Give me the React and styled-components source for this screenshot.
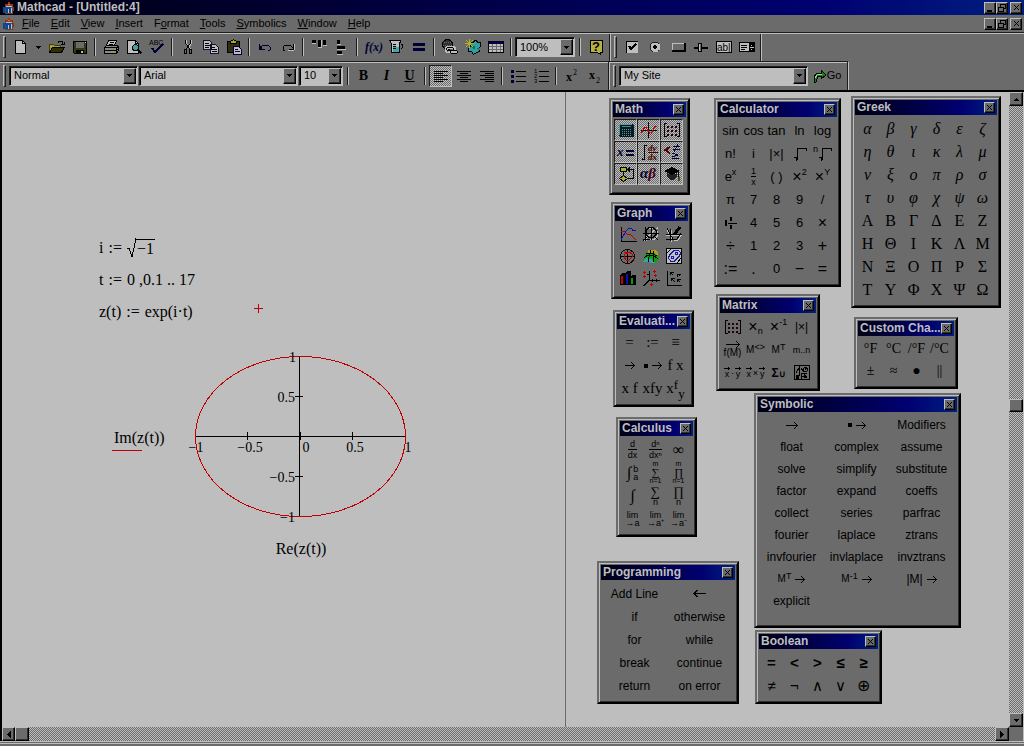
import React from 'react';
import styled, { createGlobalStyle, css } from 'styled-components';

const FACE = '#6b6b6b';
const LIGHT = '#bebebe';
const DARK = '#1c1c1c';
const RED = '#c00000';
const SANS = '"Liberation Sans", Arial, sans-serif';
const SERIF = '"Liberation Serif", "Times New Roman", serif';
const CHECKER = `repeating-conic-gradient(${LIGHT} 0 25%, ${FACE} 0 50%) 0 0 / 2px 2px`;
const CAPTION = 'linear-gradient(to right, #000014, #000070 75%, #001f80)';

const GlobalStyle = createGlobalStyle`
    * {
        box-sizing: border-box;
    }
    body {
        margin: 0;
        background: ${FACE};
        color: #000;
        font: 11px/13px ${SANS};
        overflow: hidden;
    }
`;

const raised = css`
    background: ${FACE};
    border: 1px solid;
    border-color: ${LIGHT} #000 #000 ${LIGHT};
    box-shadow: inset -1px -1px 0 #303030;
`;

const Plain = styled.button`
    display: flex;
    align-items: center;
    justify-content: center;
    padding: 0;
    border: 0;
    background: none;
    color: inherit;
    font: inherit;
`;

const Shell = styled.div`
    display: flex;
    flex-direction: column;
    height: 100vh;
`;

const TitleBar = styled.header`
    display: flex;
    align-items: center;
    gap: 3px;
    height: 15px;
    padding: 0 2px;
    background: linear-gradient(to right, #000010, #000070 80%, #001f80);
    color: ${LIGHT};
`;

const AppTitle = styled.h1`
    margin: 0;
    flex: 1;
    font-size: 12px;
`;

const MenuBar = styled.nav`
    display: flex;
    align-items: center;
    gap: 8px;
    height: 17px;
    padding: 0 2px;
`;

const MenuList = styled.div`
    display: flex;
    gap: 11px;
`;

const WindowButtons = styled.div`
    display: flex;
    margin-left: auto;
`;

const WindowButton = styled(Plain)`
    ${raised}
    width: 12px;
    height: 12px;
    &:last-child {
        margin-left: 2px;
    }
`;

const Toolbars = styled.div`
    display: flex;
    flex-direction: column;
    align-items: flex-start;
    border-top: 1px solid ${DARK};
    box-shadow: inset 0 1px 0 ${LIGHT};
    padding-top: 1px;
`;

const ToolRow = styled.div`
    display: flex;
    height: ${p => p.$height}px;
    & + & {
        border-top: 1px solid ${DARK};
        box-shadow: inset 0 1px 0 ${LIGHT};
    }
`;

const Band = styled.div`
    display: flex;
    align-items: center;
    padding: 0 2px 1px 3px;
    border-right: 1px solid ${DARK};
    box-shadow: 1px 0 0 ${LIGHT};
    & + & {
        margin-left: 1px;
    }
`;

const Grip = styled.div`
    width: 3px;
    height: 22px;
    margin-right: 3px;
    border: 1px solid;
    border-color: ${LIGHT} ${DARK} ${DARK} ${LIGHT};
`;

const Separator = styled.div`
    width: 2px;
    height: 18px;
    margin: 0 3px;
    border-left: 1px solid ${DARK};
    border-right: 1px solid ${LIGHT};
`;

const Tool = styled(Plain)`
    width: ${p => p.$width || 23}px;
    height: 22px;
    ${p => p.$pressed && css`
        background: ${CHECKER};
        border: 1px solid;
        border-color: ${DARK} ${LIGHT} ${LIGHT} ${DARK};
    `}
`;

const FormatLetter = styled.span`
    font: bold 14px/16px ${SERIF};
    font-style: ${p => (p.$italic ? 'italic' : 'normal')};
    text-decoration: ${p => (p.$underline ? 'underline' : 'none')};
`;

const ComboFrame = styled.div`
    display: flex;
    width: ${p => p.$width}px;
    height: 20px;
    margin-right: 1px;
    border: 1px solid;
    border-color: ${DARK} ${LIGHT} ${LIGHT} ${DARK};
    box-shadow: inset 1px 1px 0 #000;
    background: ${LIGHT};
    padding: 1px;
`;

const ComboSelect = styled.select`
    appearance: none;
    flex: 1;
    min-width: 0;
    padding: 0 0 0 3px;
    border: 0;
    background: none;
    color: #000;
    font: 11px/15px ${SANS};
`;

const ComboArrow = styled.span`
    ${raised}
    display: flex;
    align-items: center;
    justify-content: center;
    width: 13px;
`;

const Svg = styled.svg`
    display: block;
    flex: none;
    overflow: visible;
    shape-rendering: crispEdges;
`;

const Work = styled.main`
    flex: 1;
    min-height: 0;
    display: grid;
    grid-template-columns: minmax(0, 1fr) 14px;
    grid-template-rows: minmax(0, 1fr) 14px;
    border: solid #000;
    border-width: 2px 0 0 2px;
    box-shadow: inset -1px 0 0 ${LIGHT};
    padding-right: 1px;
`;

const Desk = styled.div`
    position: relative;
    overflow: hidden;
    background: ${LIGHT};
`;

const PageEdge = styled.div`
    position: absolute;
    top: 0;
    bottom: 0;
    left: 563px;
    border-left: 1px solid ${FACE};
`;

const Region = styled.div`
    position: absolute;
    left: ${p => p.$x}px;
    top: ${p => p.$y}px;
    display: flex;
    align-items: center;
    gap: 5px;
    font: 16px/18px ${SERIF};
    white-space: pre;
`;

const PlotRegion = styled(Region)`
    display: grid;
    grid-template-columns: 54px 222px;
    column-gap: 24px;
    row-gap: 12px;
`;

const TraceLabel = styled.div`
    padding-left: 2px;
    position: relative;
    &::after {
        content: '';
        position: absolute;
        left: 0;
        bottom: -4px;
        width: 30px;
        border-bottom: 1px solid ${RED};
    }
`;

const XLabel = styled.div`
    grid-column: 2;
    text-align: center;
`;

const Root = styled.span`
    display: flex;
    align-items: flex-end;
`;

const Radicand = styled.span`
    border-top: 1px solid #000;
    padding: 0 1px;
`;

const Track = styled.div`
    display: grid;
    background: ${CHECKER};
    ${p => (p.$vertical
        ? 'grid-template-rows: 14px 294fr 13px 302fr 14px;'
        : 'grid-template-columns: 13px 0fr 14px 1fr 14px;')}
`;

const ScrollButton = styled(Plain)`
    ${raised}
`;

const Status = styled.footer`
    height: 5px;
    border-top: 1px solid ${LIGHT};
    box-shadow: inset 0 1px 0 ${FACE}, inset 0 2px 0 ${LIGHT};
`;

const PaletteFrame = styled.section`
    position: absolute;
    left: ${p => p.$x}px;
    top: ${p => p.$y}px;
    padding: 2px 2px ${p => p.$foot}px 2px;
    background: ${FACE};
    border: 2px solid;
    border-color: ${FACE} #000 #000 ${FACE};
    box-shadow: inset 1px 1px 0 ${LIGHT}, inset -1px -1px 0 #303030;
`;

const PaletteCaption = styled.div`
    display: flex;
    align-items: center;
    height: 15px;
    padding: 0 2px;
    background: ${CAPTION};
    color: ${LIGHT};
`;

const PaletteTitle = styled.h2`
    flex: 1;
    margin: 0;
    font: bold 12px/15px ${SANS};
`;

const PaletteClose = styled(Plain)`
    ${raised}
    width: 11px;
    height: 11px;
`;

const CellGrid = styled.div`
    display: grid;
    grid-template-columns: repeat(${p => p.$cols}, ${p => p.$cell}px);
    grid-auto-rows: ${p => p.$row}px;
    padding: 2px 3px 0 1px;
`;

const Cell = styled(Plain)`
    gap: 4px;
    font: ${p => p.$font || `12px/14px ${SANS}`};
    white-space: nowrap;
    ${p => p.$pressed && css`
        background: ${CHECKER};
        border: 1px solid;
        border-color: ${DARK} ${LIGHT} ${LIGHT} ${DARK};
    `}
`;

const Small = styled.span`
    font-size: ${p => p.$size || 9}px;
    line-height: 9px;
    align-self: ${p => (p.$low ? 'flex-end' : 'flex-start')};
`;

const Script = styled.span`
    display: flex;
    gap: ${p => p.$gap || 0}px;
    height: ${p => p.$height || 18}px;
    align-items: center;
`;

const Stack = styled.span`
    display: flex;
    flex-direction: column;
    align-items: center;
    font-size: ${p => p.$size || 9}px;
    line-height: ${p => p.$line || 8}px;
`;

const Bar = styled.span`
    align-self: stretch;
    border-top: 1px solid #000;
    margin: 1px 0;
`;

const Big = styled.span`
    font: ${p => p.$size || 14}px/${p => p.$line || 14}px ${SERIF};
`;

// operators are drawn larger than the digits next to them
const Op = styled.span`
    font-size: 16px;
    line-height: 14px;
`;

const Icon = ({ w = 16, h = 16, children }) => (
    <Svg width={w} height={h} viewBox={`0 0 ${w} ${h}`} fill="none" stroke="#000" aria-hidden="true">
        {children}
    </Svg>
);

const Glyph = ({ size = 12, family = SERIF, fill = '#000', ...rest }) => (
    <text fontSize={size} fontFamily={family} fill={fill} stroke="none" {...rest} />
);

const Logo = () => (
    <Icon w={12} h={12}>
        <path d="M3 2h7v9h-7z" fill={LIGHT} stroke="#704020" />
        <path d="M7 0.500l2 3h-4z" fill="#c08020" stroke="#b03010" />
        <path d="M1.500 11v-5h3v5m0-5h3v5" stroke="#0048a0" strokeWidth="2" />
        <path d="M9 5h2v4" stroke="#903020" />
    </Icon>
);

const Down = () => <Icon w={5} h={3}><path d="M0 .5h5M1 1.500h3M2 2.500h1" /></Icon>;
const Up = () => <Icon w={5} h={3}><path d="M2 .5h1M1 1.500h3M0 2.500h5" /></Icon>;
const Left = () => <Icon w={4} h={7}><path d="M3.500 0v7M2.500 1v5M1.500 2v3M.5 3v1" /></Icon>;
const Right = () => <Icon w={4} h={7}><path d="M.5 0v7M1.500 1v5M2.500 2v3M3.500 3v1" /></Icon>;
const Cross = () => <Icon w={7} h={7}><path d="M1 1h1v1h1v1h1v-1h1v-1h1v1h-1v1h-1v1h1v1h1v1h-1v-1h-1v-1h-1v1h-1v1h-1v-1h1v-1h1v-1h-1v-1h-1z" fill="#000" stroke="none" /></Icon>;

const Arrow = ({ w = 12 }) => (
    <Icon w={w} h={7}>
        <path d={`M0 3.500h${w}M${w - 2} 2.500h1M${w - 3} 1.500h1M${w - 4} .5h1M${w - 2} 4.500h1M${w - 3} 5.500h1M${w - 4} 6.500h1`} />
    </Icon>
);
const BackArrow = () => <Icon w={13} h={7}><path d="M0 3.500h13M1 2.500h2M2 1.500h2M3 .5h2M1 4.500h2M2 5.500h2M3 6.500h2" /></Icon>;
const Dot = () => <Icon w={4} h={4}><path d="M0 0h4v4h-4z" fill="#000" stroke="none" /></Icon>;
const TinyArrow = () => <Icon w={6} h={3}><path d="M0 1.500h6M4 .5h1M4 2.500h1" /></Icon>;

const icons = {
    new: <Icon><path d="M2.500 1.500h7l3 3v10h-10z" fill={LIGHT} /><path d="M9.500 1.500v3h3" /></Icon>,
    open: (
        <Icon>
            <path d="M.5 13.500v-8h4l1 1h6v2" fill="#a8a040" stroke="#404000" />
            <path d="M.5 13.500l3-5h12l-3 5z" fill="#303000" />
            <path d="M9 3.500l1-1h3l1 2m1-2v3h-3" />
        </Icon>
    ),
    save: (
        <Icon>
            <path d="M1.500 2.500h13v12h-12l-1-1z" fill="#383810" />
            <path d="M4 3h8v6h-8z" fill={FACE} stroke="none" />
            <path d="M4 11h8v4h-8z" fill="#000" stroke="none" />
            <path d="M9 12h2v2h-2zM13 3h1v1h-1z" fill={LIGHT} stroke="none" />
        </Icon>
    ),
    print: (
        <Icon>
            <path d="M5.500 1.500h8l-2 5h-8z" fill={LIGHT} />
            <path d="M7 3.500h4M6 5.500h4" />
            <path d="M1.500 8.500l2-2h10l2 1v4l-2 3h-12z" fill="#8a8a8a" />
            <path d="M2 8.500h11v5M2 11.500h11M13.500 8.500l2-1M13.500 11.500l2-2" />
            <path d="M8 12.500h3" stroke="#b0b000" />
        </Icon>
    ),
    preview: (
        <Icon>
            <path d="M1.500 1.500h8l3 3v10h-11z" fill={LIGHT} />
            <path d="M9.500 1.500v3h3" />
            <circle cx="9.500" cy="8.500" r="3" fill="#40a0a0" />
            <path d="M11.500 10.500l4 4" strokeWidth="2" />
        </Icon>
    ),
    spell: (
        <Icon>
            <Glyph x="0" y="6" size="7" family={SANS}>ABC</Glyph>
            <path d="M3 9l3 4 8-8" stroke="#000038" strokeWidth="2" />
        </Icon>
    ),
    cut: (
        <Icon>
            <path d="M6.500 1v3l4 6M11.500 1v3l-3 5" stroke={LIGHT} />
            <path d="M5.500 1v3l2 3 3 4M10.500 1v3l-2 3-3 4" />
            <path d="M4.500 10.500h2v4h-2zM9.500 10.500h2v4h-2z" />
        </Icon>
    ),
    copy: (
        <Icon>
            <path d="M.5 1.500h6l2 2v7h-8zM7.500 5.500h5l3 3v6h-8z" fill={LIGHT} stroke="#101030" />
            <path d="M2 4.500h4M2 6.500h5M2 8.500h4M9 8.500h3M9 10.500h5M9 12.500h5" />
        </Icon>
    ),
    paste: (
        <Icon>
            <path d="M1.500 2.500h12v11h-12z" fill="#303010" />
            <path d="M4.500 4.500v-2l3-2 3 2v2z" fill="#a8a820" />
            <path d="M7.500 7.500h5l3 3v5h-8z" fill={LIGHT} stroke="#000040" />
            <path d="M9 10.500h3M9 12.500h5" stroke="#000040" />
        </Icon>
    ),
    undo: <Icon><path d="M2.500 5v5h5M3 9l3-3h5l2 2v3l-2 1" stroke="#000030" /><path d="M2 6h1v1h1v1h1v2h-3z" fill="#000030" stroke="none" /></Icon>,
    redo: <Icon><path d="M13.500 5v5h-5M13 9l-3-3h-5l-2 2v3l2 1" /><path d="M14 11.500h-6M14.500 5v6" stroke={LIGHT} /></Icon>,
    alignTop: <Icon><path d="M1 1h4v3h-4zM7 1h3v7h-3zM12 1h3v5h-3z" fill="#000" stroke="none" /><path d="M1 4.500h4M7 8.500h4M12 6.500h4M10.500 1v7" stroke={LIGHT} /></Icon>,
    alignLeft: <Icon><path d="M3 1h3v4h-3zM3 7h8v3h-8zM3 12h5v3h-5z" fill="#000" stroke="none" /><path d="M3 5.500h4M3 10.500h9M3 15.500h6" stroke={LIGHT} /></Icon>,
    fx: <Icon><Glyph x="0" y="12" size="12" fill="#000038" fontStyle="italic" fontWeight="bold">f(x)</Glyph></Icon>,
    unit: (
        <Icon>
            <path d="M1.500 1.500h11v2h-1v10h-8v-9z" fill={LIGHT} />
            <path d="M5 8h6v5h-6z" fill="#40a8b0" stroke="none" />
            <path d="M5 5.500h3M5 7.500h3M5 9.500h3M12.500 5.500h2v3l-2 2" />
        </Icon>
    ),
    equals: <Icon><path d="M2 4h12v3h-12zM2 9h12v3h-12z" fill="#000038" stroke="none" /></Icon>,
    link: (
        <Icon>
            <circle cx="5.500" cy="5.500" r="5" fill="#303030" />
            <path d="M2 3.500h7M1 6.500h9" stroke={FACE} strokeDasharray="1 1" />
            <path d="M5.500 8.500h6l1 1v2l-1 1h-6l-1-1v-2z" stroke={LIGHT} strokeWidth="3" />
            <path d="M9.500 11.500h5l1 1v1l-1 1h-5l-1-1v-1z" fill={LIGHT} />
            <path d="M5.500 8.500h5l1 1v1l-1 1h-5l-1-1v-1z" />
        </Icon>
    ),
    web: (
        <Icon>
            <path d="M5.500 3.500h3l1-2h2l1 2h3v4l-2 2 1 3-3 1-3 2-2-3h-3v-3l2-2z" fill="#30a0a8" />
            <path d="M6 7h4v3h-2zM11 9h3v3" fill="#207040" stroke="none" />
            <path d="M4.500 0v9M0 4.500h9M1 1l7 7M8 1l-7 7" stroke="#b8b020" />
        </Icon>
    ),
    table: (
        <Icon>
            <path d="M.5 2.500h15v11h-15z" fill={LIGHT} />
            <path d="M1 3h14v2h-14z" fill="#000050" stroke="none" />
            <path d="M1 7.500h14M1 10.500h14M4.500 5v8M8.500 5v8M12.500 5v8" stroke={FACE} />
        </Icon>
    ),
    help: (
        <Icon>
            <path d="M2.500 1.500h12v12h-2v2l-3-2h-7z" fill="#b8b040" />
            <Glyph x="4" y="12" size="13" family={SANS} fontWeight="bold">?</Glyph>
        </Icon>
    ),
    check: <Icon><path d="M2 2h12v12h-12z" fill={LIGHT} stroke="none" /><path d="M2.500 14v-11.500h11.500" /><path d="M5 7l2 3 5-5" strokeWidth="2" /></Icon>,
    radio: (
        <Icon>
            <circle cx="8" cy="8" r="5" fill={LIGHT} stroke="#202020" />
            <path d="M12.500 5v6M11 12.500h-5" stroke={LIGHT} />
            <path d="M6 7h4v2h-4zM7 6h2v4h-2z" fill="#000" stroke="none" />
        </Icon>
    ),
    push: <Icon><path d="M2 4.500h12M2.500 4v8" stroke={LIGHT} /><path d="M2 11.500h12.500v-7.500" strokeWidth="2" /></Icon>,
    slider: <Icon><path d="M1 8.500h14" strokeWidth="2" /><path d="M5.500 4.500h3v8h-3z" fill={FACE} /><path d="M6.500 5v7" stroke={LIGHT} /></Icon>,
    text: <Icon><path d="M.5 2.500h15v11h-15z" fill={LIGHT} /><Glyph x="1" y="12" size="10" family={SANS}>ab|</Glyph></Icon>,
    list: (
        <Icon>
            <path d="M.5 3.500h15v9h-15z" fill={LIGHT} />
            <path d="M2 6.500h6M2 8.500h6M2 10.500h4" />
            <path d="M10 4h5v8h-5z" fill="#000" stroke="none" /><path d="M11 8h4M12 6h1M12 10h1" stroke={LIGHT} />
        </Icon>
    ),
    left: <Icon><path d="M1 3.500h14M1 5.500h9M1 7.500h14M1 9.500h9M1 11.500h14M1 13.500h9" /></Icon>,
    center: <Icon><path d="M1 3.500h14M4 5.500h8M1 7.500h14M4 9.500h8M1 11.500h14M4 13.500h8" /></Icon>,
    right: <Icon><path d="M1 3.500h14M6 5.500h9M1 7.500h14M6 9.500h9M1 11.500h14M6 13.500h9" /></Icon>,
    bullets: <Icon><path d="M1 2h3v3h-3zM1 7h3v3h-3zM1 12h3v3h-3z" fill="#000030" stroke="none" /><path d="M6 3.500h10M6 8.500h10M6 13.500h10" /></Icon>,
    numbers: (
        <Icon>
            <Glyph size="6" family={SANS} x="1" y="5">1</Glyph>
            <Glyph size="6" family={SANS} x="1" y="10">2</Glyph>
            <Glyph size="6" family={SANS} x="1" y="15">3</Glyph>
            <path d="M6 3.500h10M6 8.500h10M6 13.500h10" />
        </Icon>
    ),
    sup: <Icon><Glyph size="12" x="2" y="13" fontWeight="bold">x</Glyph><Glyph size="8" x="9" y="7">2</Glyph></Icon>,
    sub: <Icon><Glyph size="12" x="2" y="11" fontWeight="bold">x</Glyph><Glyph size="8" x="9" y="15">2</Glyph></Icon>,
    go: (
        <Icon w={14} h={14}>
            <path d="M1 13v-5l3-4h4v-3l5 5-5 4v-3h-3l-2 6z" fill="#009000" />
            <path d="M2 9l3-4h4" stroke={LIGHT} />
        </Icon>
    ),
    // math palette
    calc: (
        <Icon w={18}>
            <path d="M2 2h14l1 2v11h-14l-1-1z" fill="#001c24" stroke="none" />
            <path d="M2.500 13v-10.500h12" stroke="#40a0a8" />
            <path d="M5 4.500h9" stroke="#607878" />
            <path d="M5 7.500h10M5 9.500h10M5 11.500h10M5 13.500h10" stroke="#7c8c8c" strokeDasharray="1 1" />
        </Icon>
    ),
    curve: <Icon w={18}><path d="M1 8.500h16M8.500 0v16" /><path d="M1 11l4-6h1l4 7h1l4-8h2" stroke={RED} /></Icon>,
    matrix: (
        <Icon w={18}>
            <path d="M4 1.500h-2.500v13h2.500M14 1.500h2.500v13h-2.500" />
            <path d="M4 4.500h10M4 8.500h10M4 12.500h10" stroke="#200010" strokeWidth="2" strokeDasharray="2 2" />
        </Icon>
    ),
    evaluate: <Icon w={18}><Glyph x="0" y="12" size="13" fontWeight="bold" fontStyle="italic" fill="#000030">x</Glyph><path d="M9 6.500h8M9 10.500h8" stroke="#000030" strokeWidth="2" /></Icon>,
    calculus: (
        <Icon w={18}>
            <path d="M6.500 2v-1h-2v14h-2v-1" />
            <Glyph x="8" y="7" size="9" fontStyle="italic" fontWeight="bold" fill="#400000">dy</Glyph>
            <path d="M8 8.500h10" stroke="#400000" />
            <Glyph x="8" y="16" size="9" fontStyle="italic" fontWeight="bold" fill="#400000">dx</Glyph>
        </Icon>
    ),
    bool: (
        <Icon w={18}>
            <path d="M7 3l-5 3 5 3" stroke="#500000" strokeWidth="2" />
            <path d="M10 2.500h7M10 5.500h7M15 0l-4 8M9 9l6 2-6 2M9 14.500h7" stroke="#000030" />
        </Icon>
    ),
    program: (
        <Icon w={18}>
            <path d="M3.500 1.500h6v4h-6z" fill="#b0b020" /><path d="M6.500 9.500l4 3-4 3-4-3z" fill="#b0b020" />
            <path d="M6.500 6v3M11 12.500h5v-9h-4M13 1.500l-2 2 2 2" />
        </Icon>
    ),
    greek: <Icon w={18}><Glyph x="0" y="12" size="15" fontWeight="bold" fontStyle="italic" fill="#000030">α<tspan fill="#400010">β</tspan></Glyph></Icon>,
    symbolic: (
        <Icon w={18}>
            <path d="M9 1l8 4-8 4-8-4z" fill="#000" stroke="none" />
            <path d="M4 7v4l4 3h2l4-3v-4l-5 2z" fill="#202020" stroke="none" />
            <path d="M9 5h6.500v9" /><path d="M15.500 11v4" stroke="#505010" strokeWidth="2" />
        </Icon>
    ),
    // graph palette
    xy: <Icon w={18}><path d="M2.500 1v14.500h15" /><path d="M2 5h3l3 3 4 1 5 5" stroke={RED} /><path d="M2 14l5-9 3-3 3 1 1 2 3-1" stroke="#1010b0" /></Icon>,
    zoom: (
        <Icon w={18}>
            <path d="M7 2.500h5l3 3v5l-3 3h-4M2 14.500l5-5 4-4 5-4M4.500 3v12" stroke={LIGHT} />
            <path d="M7 1.500h4l3 3v4l-3 3h-4l-3-3v-4z" />
            <path d="M3.500 1v14M9.500 1v13M1 7.500h16M1 13.500h7M12 10l4 4M1 15l5-5" />
        </Icon>
    ),
    trace: (
        <Icon w={18}>
            <path d="M1 9.500h16M6.500 4v12M2 4l3 6M9 14h4l4-6" stroke={LIGHT} />
            <path d="M1 8.500h16M5.500 3v12M2 2l3 6 3 5h4l4-6M1 13.500h7" />
            <path d="M9 9l6-8" strokeWidth="3" />
        </Icon>
    ),
    polar: (
        <Icon w={18}>
            <circle cx="8.500" cy="8.500" r="7" stroke="#200000" /><path d="M1 8.500h15M8.500 1v15" />
            <path d="M9 5l-3 1-1 3 2 3 3 0 3-3v-3l-3-2-5 0" stroke={RED} />
        </Icon>
    ),
    surface: (
        <Icon w={18}>
            <path d="M1 14l3-9 3-3 7 1 3 7-3 5z" fill="#10a010" stroke="none" />
            <path d="M1 14l3-4 5 1 5 4z" fill="#30a8a8" stroke="none" />
            <path d="M6 3h6l4 3" stroke="#b0a020" strokeWidth="3" />
            <path d="M2 10l4-3h5l5 4M4 6l5-1 6 3M6 14l1-5 2-7M11 14v-6l1-5" />
        </Icon>
    ),
    contour: (
        <Icon w={18}>
            <path d="M1.500 .5h15v15h-15z" fill={LIGHT} />
            <path d="M5.500 13l-2-3 1-3 5-5h4l2 3-1 3-5 5z" stroke="#1818a0" />
            <path d="M6.500 8.500h2v2h-2zM10.500 4.500h2v2h-2z" stroke="#1818a0" />
            <path d="M2 5l4-4M12 15l4-5" />
        </Icon>
    ),
    bars: (
        <Icon w={18}>
            <path d="M1 5l2-2h3v12h-5zM6 3l2-2h4v14h-6zM11 7l2-2h4v10h-6z" fill="#000" stroke="none" />
            <path d="M2 6h2v8h-2z" fill={RED} stroke="none" /><path d="M7 4h2v10h-2z" fill="#1010b0" stroke="none" /><path d="M12 8h2v6h-2z" fill="#00a010" stroke="none" />
        </Icon>
    ),
    scatter: (
        <Icon w={18}>
            <path d="M7.500 1v9l-6 6M7 10.500h11M5 4.500h2M10.500 9v3M14.500 9v3" />
            <path d="M1 2.500h3M2.500 1v3M11 1.500h3M12.500 0v3M1 6.500h3M2.500 5v3M12 5.500h3M13.500 4v3M8 14.500h3M9.500 13v3" stroke={RED} />
        </Icon>
    ),
    vector: (
        <Icon w={18}>
            <path d="M2.500 1v14.500h14" /><path d="M8 5l-3-3M5.500 5v-3h3M15 6l-2-2M12.500 7v-3h3M10 12l-3-3M6.500 11v-3h3M15 12l-2-2M12.500 12v-3h3" />
        </Icon>
    ),
    root: <Icon w={14} h={14}><path d="M1 10.500h2.500v3M4.500 13v-11.500h9v2" /></Icon>,
    mixed: <Icon><path d="M2 5h2v6h-2zM7 2h2v4h-2zM7 10h2v4h-2z" fill="#000" stroke="none" /><path d="M5 8.500h9" /></Icon>,
    picture: (
        <Icon>
            <path d="M.5 .5h15v14h-15z" /><path d="M2 8l3-5v8l-3 3h5v-5l6-1M7 3l3 4M11 5l2-3M8 11l5 2M10 9l3 4" />
            <circle cx="11.500" cy="4.500" r="2" /><path d="M2 10h2v4h-2z" fill="#000" />
        </Icon>
    )
};

const Sup = ({ base, children, low, height }) => (
    <Script $height={height}>{base}<Small $low={low}>{children}</Small></Script>
);

const Frac = ({ top, bottom }) => <Stack><span>{top}</span><Bar /><span>{bottom}</span></Stack>;

const Limits = ({ top, symbol, bottom }) => (
    <Stack $size={top ? 7 : 9} $line={top ? 6 : 8}>
        {top && <span>{top}</span>}
        <Big $size={top ? 11 : 13} $line={top ? 11 : 12}>{symbol}</Big>
        <span>{bottom}</span>
    </Stack>
);

const VecPair = styled.span`
    display: flex;
    align-items: flex-end;
    gap: 1px;
    font-size: 9px;
    line-height: 9px;
`;

const Vec = ({ op }) => (
    <VecPair>
        <Stack><TinyArrow />x</Stack>{op}<Stack><TinyArrow />y</Stack>
    </VecPair>
);

const serif = size => `${size}px/${size + 2}px ${SERIF}`;

const times = <Op>×</Op>;
const matrixOf = script => <Sup base={<Stack $size={10}>M</Stack>} height={14}>{script}</Sup>;

const palettes = [
    {
        title: 'Math', x: 609, y: 98, cols: 3, row: 22, foot: 8, pressed: true,
        cells: ['calc', 'curve', 'matrix', 'evaluate', 'calculus', 'bool', 'program', 'greek', 'symbolic'].map(n => icons[n])
    },
    {
        title: 'Graph', x: 611, y: 202, cols: 3, row: 22, foot: 8,
        cells: ['xy', 'zoom', 'trace', 'polar', 'surface', 'contour', 'bars', 'scatter', 'vector'].map(n => icons[n])
    },
    {
        title: 'Evaluati...', x: 613, y: 310, cols: 3, font: serif(15),
        cells: [
            '=', ':=', '≡', <Arrow w={10} />, <><Dot /><Arrow w={10} /></>, 'f x', 'x f', 'xfy',
            <Script>x<Small $size={13}>f</Small><Small $size={13} $low>y</Small></Script>
        ]
    },
    {
        title: 'Calculus', x: 616, y: 417, cols: 3,
        cells: [
            <Frac top="d" bottom="dx" />, <Frac top="dⁿ" bottom="dxⁿ" />, <Big $size={16}>∞</Big>,
            <Script $gap={2}><Big $size={16}>∫</Big><Stack><span>b</span><span>a</span></Stack></Script>,
            <Limits top="m" symbol="∑" bottom="n=1" />, <Limits top="m" symbol="∏" bottom="n=1" />,
            <Big $size={16}>∫</Big>, <Limits symbol="∑" bottom="n" />, <Limits symbol="∏" bottom="n" />,
            <Stack><span>lim</span><span>→a</span></Stack>, <Stack><span>lim</span><span>→a⁺</span></Stack>, <Stack><span>lim</span><span>→a⁻</span></Stack>
        ]
    },
    {
        title: 'Calculator', x: 714, y: 98, cols: 5, font: `13px/15px ${SANS}`,
        cells: [
            'sin', 'cos', 'tan', 'ln', 'log',
            'n!', 'i', '|×|', icons.root, <Script><Small>n</Small>{icons.root}</Script>,
            <Sup base="e">x</Sup>, <Frac top="1" bottom="x" />, '( )', <Sup base={times}>2</Sup>, <Sup base={times}>Y</Sup>,
            'π', '7', '8', '9', '/', icons.mixed, '4', '5', '6', times, <Op>÷</Op>, '1', '2', '3', <Op>+</Op>,
            <Op>:=</Op>, <Op>.</Op>, '0', <Op>−</Op>, <Op>=</Op>
        ]
    },
    {
        title: 'Matrix', x: 716, y: 294, cols: 4,
        cells: [
            icons.matrix, <Sup base={times} low>n</Sup>, <Sup base={times}>-1</Sup>, '|×|',
            <Stack $size={10} $line={10}><Arrow w={14} />f(M)</Stack>, matrixOf('<>'), matrixOf('T'), <Stack>m..n</Stack>,
            <Vec op="·" />, <Vec op="×" />, <b>Σ<Small>∪</Small></b>, icons.picture
        ]
    },
    {
        title: 'Greek', x: 851, y: 96, cols: 6, font: serif(16),
        cells: [
            ...[...'αβγδεζηθικλμνξοπρστυφχψω'].map(c => <i>{c}</i>),
            ...'ΑΒΓΔΕΖΗΘΙΚΛΜΝΞΟΠΡΣΤΥΦΧΨΩ'
        ]
    },
    {
        title: 'Custom Cha...', x: 854, y: 317, cols: 4, row: 22, font: serif(14),
        cells: ['°F', '°C', '/°F', '/°C', '±', '≈', '●', '||']
    },
    {
        title: 'Symbolic', x: 754, y: 393, cols: 3, cell: 65, row: 22, foot: 14,
        cells: [
            <Arrow />, <><Dot /><Arrow w={10} /></>, 'Modifiers', 'float', 'complex', 'assume', 'solve', 'simplify', 'substitute',
            'factor', 'expand', 'coeffs', 'collect', 'series', 'parfrac', 'fourier', 'laplace', 'ztrans',
            'invfourier', 'invlaplace', 'invztrans',
            <>{matrixOf('T')}<Arrow w={10} /></>, <>{matrixOf('-1')}<Arrow w={10} /></>, <>|M|<Arrow w={10} /></>, 'explicit'
        ]
    },
    {
        title: 'Programming', x: 597, y: 561, cols: 2, cell: 65,
        cells: ['Add Line', <BackArrow />, 'if', 'otherwise', 'for', 'while', 'break', 'continue', 'return', 'on error']
    },
    {
        title: 'Boolean', x: 755, y: 630, cols: 5, font: `15px/16px ${SANS}`,
        cells: [<b>=</b>, <b>&lt;</b>, <b>&gt;</b>, <b>≤</b>, <b>≥</b>, '≠', '¬', '∧', '∨', <Op>⊕</Op>]
    }
];

const Palette = ({ title, x, y, cols, cells, cell = 23, row = 23, foot = 5, font, pressed }) => (
    <PaletteFrame $x={x - 2} $y={y - 92} $foot={foot} aria-label={title}>
        <PaletteCaption>
            <PaletteTitle>{title}</PaletteTitle>
            <PaletteClose aria-label="Close"><Cross /></PaletteClose>
        </PaletteCaption>
        <CellGrid $cols={cols} $cell={cell} $row={row}>
            {cells.map((content, i) => <Cell key={i} $font={font} $pressed={pressed}>{content}</Cell>)}
        </CellGrid>
    </PaletteFrame>
);

const Combo = ({ label, value, width }) => (
    <ComboFrame $width={width}>
        <ComboSelect aria-label={label} defaultValue={value}><option>{value}</option></ComboSelect>
        <ComboArrow><Down /></ComboArrow>
    </ComboFrame>
);

// '|' is a separator
const Tools = ({ names }) => names.map((name, i) => (
    name === '|'
        ? <Separator key={i} />
        : <Tool key={i} aria-label={name} $pressed={name === 'left'}>{icons[name]}</Tool>
));

const SystemButtons = () => (
    <WindowButtons>
        <WindowButton aria-label="Minimize"><Icon w={8} h={8}><path d="M1 7h5" strokeWidth="2" /></Icon></WindowButton>
        <WindowButton aria-label="Restore"><Icon w={8} h={8}><path d="M2.500 3v-2.500h5v4h-2M.5 3.500h5v4h-5z" /></Icon></WindowButton>
        <WindowButton aria-label="Close"><Cross /></WindowButton>
    </WindowButtons>
);

const Plot = () => (
    <Svg width="222" height="180" viewBox="190 348 222 180" fill="none" stroke="#000" role="img" aria-label="Plot of z(t)">
        <path d="M195 436.500h210M299.500 356v160M247.500 432v8M352.500 432v8M300.500 432v8M405.500 432v8M295 396.500h8M295 476.500h8M295 516.500h8" />
        <ellipse cx="300.500" cy="436.500" rx="105" ry="80" stroke={RED} />
        <g textAnchor="end">
            <Glyph size="14" x="296" y="362">1</Glyph>
            <Glyph size="14" x="295" y="402">0.5</Glyph>
            <Glyph size="14" x="295" y="482">−0.5</Glyph>
            <Glyph size="14" x="295" y="522">−1</Glyph>
        </g>
        <g textAnchor="middle">
            <Glyph size="14" x="196" y="452">−1</Glyph>
            <Glyph size="14" x="250" y="452">−0.5</Glyph>
            <Glyph size="14" x="306" y="452">0</Glyph>
            <Glyph size="14" x="355" y="452">0.5</Glyph>
            <Glyph size="14" x="408" y="452">1</Glyph>
        </g>
    </Svg>
);

const Worksheet = () => (
    <>
        <Region $x={97} $y={146}>
            <span>i</span><span>:=</span>
            <Root>
                <Icon w={9} h={20}><path d="M0 11l2-1 3 9 4-18.500" /></Icon>
                <Radicand>−1</Radicand>
            </Root>
        </Region>
        <Region $x={97} $y={179}><span>t</span><span>:=</span><span>0 ,0.1 .. 17</span></Region>
        <Region $x={97} $y={211}><span>z(t)</span><span>:=</span><span>exp(i·t)</span></Region>
        <Region $x={252} $y={212}><Icon w={9} h={9}><path d="M0 4.500h9M4.500 0v9" stroke={RED} /></Icon></Region>
        <PlotRegion $x={110} $y={256}>
            <TraceLabel>Im(z(t))</TraceLabel>
            <Plot />
            <XLabel>Re(z(t))</XLabel>
        </PlotRegion>
    </>
);

const menus = ['File', 'Edit', 'View', 'Insert', 'Format', 'Tools', 'Symbolics', 'Window', 'Help'];

// index of the underlined letter, when it is not the first one
const accelerators = { Format: 1 };

const Menu = ({ name }) => {
    const at = accelerators[name] || 0;
    return <Plain><span>{name.slice(0, at)}<u>{name[at]}</u>{name.slice(at + 1)}</span></Plain>;
};

const App = () => (
    <Shell>
        <GlobalStyle />
        <TitleBar>
            <Logo />
            <AppTitle>Mathcad - [Untitled:4]</AppTitle>
            <SystemButtons />
        </TitleBar>
        <MenuBar>
            <Logo />
            <MenuList>
                {menus.map(name => <Menu key={name} name={name} />)}
            </MenuList>
            <SystemButtons />
        </MenuBar>
        <Toolbars>
            <ToolRow $height={27}>
                <Band>
                    <Grip />
                    <Tools names={['new']} />
                    <Tool $width={13} aria-label="New from template"><Down /></Tool>
                    <Tools names={[
                        'open', 'save', '|', 'print', 'preview', 'spell', '|', 'cut', 'copy', 'paste', '|', 'undo', 'redo', '|',
                        'alignTop', 'alignLeft', '|', 'fx', 'unit', 'equals', '|', 'link', 'web', 'table', '|'
                    ]} />
                    <Combo label="Zoom" value="100%" width={60} />
                    <Tools names={['|', 'help']} />
                </Band>
                <Band>
                    <Grip />
                    <Tools names={['check', 'radio', 'push', 'slider', 'text', 'list']} />
                </Band>
            </ToolRow>
            <ToolRow $height={29}>
                <Band>
                    <Grip />
                    <Combo label="Style" value="Normal" width={129} />
                    <Combo label="Font" value="Arial" width={159} />
                    <Combo label="Size" value="10" width={44} />
                    <Separator />
                    <Tool><FormatLetter>B</FormatLetter></Tool>
                    <Tool><FormatLetter $italic>I</FormatLetter></Tool>
                    <Tool><FormatLetter $underline>U</FormatLetter></Tool>
                    <Tools names={['|', 'left', 'center', 'right', '|', 'bullets', 'numbers', '|', 'sup', 'sub']} />
                </Band>
                <Band>
                    <Grip />
                    <Combo label="Site" value="My Site" width={189} />
                    <Tool $width={36}>{icons.go}Go</Tool>
                </Band>
            </ToolRow>
        </Toolbars>
        <Work>
            <Desk>
                <PageEdge />
                <Worksheet />
                {palettes.map(p => <Palette key={p.title} {...p} />)}
            </Desk>
            <Track $vertical>
                <ScrollButton aria-label="Scroll up"><Up /></ScrollButton>
                <span />
                <ScrollButton aria-label="Vertical position" />
                <span />
                <ScrollButton aria-label="Scroll down"><Down /></ScrollButton>
            </Track>
            <Track>
                <ScrollButton aria-label="Scroll left"><Left /></ScrollButton>
                <span />
                <ScrollButton aria-label="Horizontal position" />
                <span />
                <ScrollButton aria-label="Scroll right"><Right /></ScrollButton>
            </Track>
        </Work>
        <Status />
    </Shell>
);

export default App;
